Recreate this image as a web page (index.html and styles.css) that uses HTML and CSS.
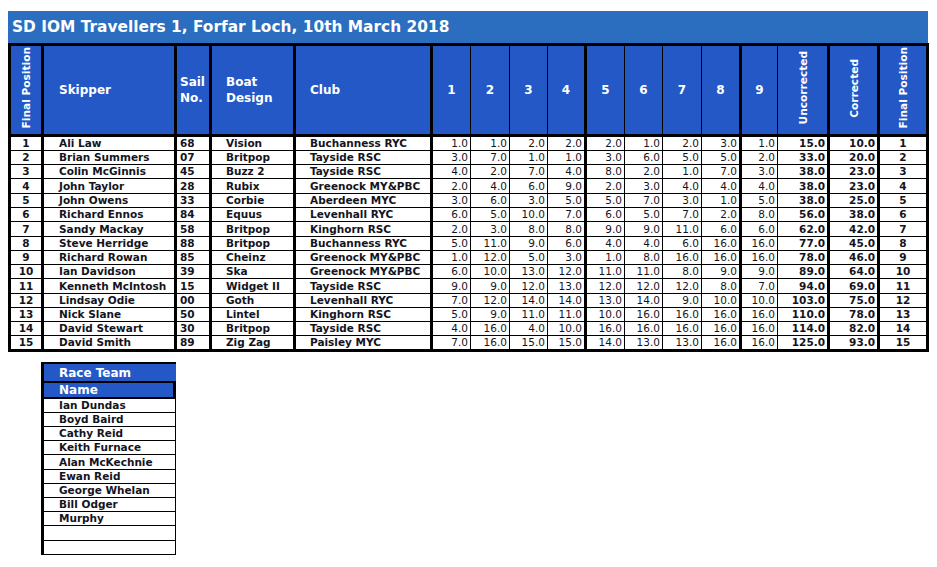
FILE: index.html
```html
<!DOCTYPE html>
<html>
<head>
<meta charset="utf-8">
<link rel="stylesheet" href="styles.css">
</head>
<body>
<div class="page">
  <div class="title">SD IOM Travellers 1, Forfar Loch, 10th March 2018</div>
  <table class="results">
    <colgroup>
      <col class="c-pos"><col class="c-skip"><col class="c-sail"><col class="c-boat"><col class="c-club">
      <col class="c-r38"><col class="c-r39"><col class="c-r38"><col class="c-r39"><col class="c-r38"><col class="c-r38"><col class="c-r39"><col class="c-r40"><col class="c-r36">
      <col class="c-unc"><col class="c-cor"><col class="c-fin">
    </colgroup>
    <thead>
      <tr>
        <th class="ctr"><span class="vert">Final Position</span></th>
        <th class="left skip">Skipper</th>
        <th class="left sail">Sail<br>No.</th>
        <th class="left boat">Boat<br>Design</th>
        <th class="left club">Club</th>
        <th>1</th><th>2</th><th>3</th><th>4</th><th>5</th><th>6</th><th>7</th><th>8</th><th>9</th>
        <th><span class="vert">Uncorrected</span></th>
        <th><span class="vert">Corrected</span></th>
        <th><span class="vert">Final Position</span></th>
      </tr>
    </thead>
    <tbody>
      <tr><td>1</td><td>Ali Law</td><td>68</td><td>Vision</td><td>Buchanness RYC</td><td>1.0</td><td>1.0</td><td>2.0</td><td>2.0</td><td>2.0</td><td>1.0</td><td>2.0</td><td>3.0</td><td>1.0</td><td>15.0</td><td>10.0</td><td>1</td></tr>
      <tr><td>2</td><td>Brian Summers</td><td>07</td><td>Britpop</td><td>Tayside RSC</td><td>3.0</td><td>7.0</td><td>1.0</td><td>1.0</td><td>3.0</td><td>6.0</td><td>5.0</td><td>5.0</td><td>2.0</td><td>33.0</td><td>20.0</td><td>2</td></tr>
      <tr><td>3</td><td>Colin McGinnis</td><td>45</td><td>Buzz 2</td><td>Tayside RSC</td><td>4.0</td><td>2.0</td><td>7.0</td><td>4.0</td><td>8.0</td><td>2.0</td><td>1.0</td><td>7.0</td><td>3.0</td><td>38.0</td><td>23.0</td><td>3</td></tr>
      <tr><td>4</td><td>John Taylor</td><td>28</td><td>Rubix</td><td>Greenock MY&amp;PBC</td><td>2.0</td><td>4.0</td><td>6.0</td><td>9.0</td><td>2.0</td><td>3.0</td><td>4.0</td><td>4.0</td><td>4.0</td><td>38.0</td><td>23.0</td><td>4</td></tr>
      <tr><td>5</td><td>John Owens</td><td>33</td><td>Corbie</td><td>Aberdeen MYC</td><td>3.0</td><td>6.0</td><td>3.0</td><td>5.0</td><td>5.0</td><td>7.0</td><td>3.0</td><td>1.0</td><td>5.0</td><td>38.0</td><td>25.0</td><td>5</td></tr>
      <tr><td>6</td><td>Richard Ennos</td><td>84</td><td>Equus</td><td>Levenhall RYC</td><td>6.0</td><td>5.0</td><td>10.0</td><td>7.0</td><td>6.0</td><td>5.0</td><td>7.0</td><td>2.0</td><td>8.0</td><td>56.0</td><td>38.0</td><td>6</td></tr>
      <tr><td>7</td><td>Sandy Mackay</td><td>58</td><td>Britpop</td><td>Kinghorn RSC</td><td>2.0</td><td>3.0</td><td>8.0</td><td>8.0</td><td>9.0</td><td>9.0</td><td>11.0</td><td>6.0</td><td>6.0</td><td>62.0</td><td>42.0</td><td>7</td></tr>
      <tr><td>8</td><td>Steve Herridge</td><td>88</td><td>Britpop</td><td>Buchanness RYC</td><td>5.0</td><td>11.0</td><td>9.0</td><td>6.0</td><td>4.0</td><td>4.0</td><td>6.0</td><td>16.0</td><td>16.0</td><td>77.0</td><td>45.0</td><td>8</td></tr>
      <tr><td>9</td><td>Richard Rowan</td><td>85</td><td>Cheinz</td><td>Greenock MY&amp;PBC</td><td>1.0</td><td>12.0</td><td>5.0</td><td>3.0</td><td>1.0</td><td>8.0</td><td>16.0</td><td>16.0</td><td>16.0</td><td>78.0</td><td>46.0</td><td>9</td></tr>
      <tr><td>10</td><td>Ian Davidson</td><td>39</td><td>Ska</td><td>Greenock MY&amp;PBC</td><td>6.0</td><td>10.0</td><td>13.0</td><td>12.0</td><td>11.0</td><td>11.0</td><td>8.0</td><td>9.0</td><td>9.0</td><td>89.0</td><td>64.0</td><td>10</td></tr>
      <tr><td>11</td><td>Kenneth McIntosh</td><td>15</td><td>Widget II</td><td>Tayside RSC</td><td>9.0</td><td>9.0</td><td>12.0</td><td>13.0</td><td>12.0</td><td>12.0</td><td>12.0</td><td>8.0</td><td>7.0</td><td>94.0</td><td>69.0</td><td>11</td></tr>
      <tr><td>12</td><td>Lindsay Odie</td><td>00</td><td>Goth</td><td>Levenhall RYC</td><td>7.0</td><td>12.0</td><td>14.0</td><td>14.0</td><td>13.0</td><td>14.0</td><td>9.0</td><td>10.0</td><td>10.0</td><td>103.0</td><td>75.0</td><td>12</td></tr>
      <tr><td>13</td><td>Nick Slane</td><td>50</td><td>Lintel</td><td>Kinghorn RSC</td><td>5.0</td><td>9.0</td><td>11.0</td><td>11.0</td><td>10.0</td><td>16.0</td><td>16.0</td><td>16.0</td><td>16.0</td><td>110.0</td><td>78.0</td><td>13</td></tr>
      <tr><td>14</td><td>David Stewart</td><td>30</td><td>Britpop</td><td>Tayside RSC</td><td>4.0</td><td>16.0</td><td>4.0</td><td>10.0</td><td>16.0</td><td>16.0</td><td>16.0</td><td>16.0</td><td>16.0</td><td>114.0</td><td>82.0</td><td>14</td></tr>
      <tr><td>15</td><td>David Smith</td><td>89</td><td>Zig Zag</td><td>Paisley MYC</td><td>7.0</td><td>16.0</td><td>15.0</td><td>15.0</td><td>14.0</td><td>13.0</td><td>13.0</td><td>16.0</td><td>16.0</td><td>125.0</td><td>93.0</td><td>15</td></tr>
    </tbody>
  </table>

  <table class="team">
    <tr><th class="team-title">Race Team</th></tr>
    <tr><th class="team-name">Name</th></tr>
    <tr><td>Ian Dundas</td></tr>
    <tr><td>Boyd Baird</td></tr>
    <tr><td>Cathy Reid</td></tr>
    <tr><td>Keith Furnace</td></tr>
    <tr><td>Alan McKechnie</td></tr>
    <tr><td>Ewan Reid</td></tr>
    <tr><td>George Whelan</td></tr>
    <tr><td>Bill Odger</td></tr>
    <tr><td>Murphy</td></tr>
    <tr><td></td></tr>
    <tr><td></td></tr>
  </table>
</div>
</body>
</html>
```

FILE: styles.css
```css
* { box-sizing: border-box; }
html, body { margin: 0; padding: 0; background: #ffffff; }
body { font-family: "DejaVu Sans", Verdana, sans-serif; color: #14141e; }
.page { padding: 11px 0 0 8px; }

.title {
  width: 920px;
  height: 32px;
  background: #2b6dbe;
  color: #ffffff;
  font-weight: bold;
  font-size: 15.4px;
  line-height: 33px;
  padding-left: 4px;
  white-space: nowrap;
}

.results {
  table-layout: fixed;
  border-collapse: separate;
  border-spacing: 0;
  width: 921px;
  border-top: 3px solid #000;
  border-left: 3px solid #000;
  font-size: 10.5px;
  font-weight: bold;
}
.c-pos { width: 33px; }
.c-skip { width: 133px; }
.c-sail { width: 35px; }
.c-boat { width: 84px; }
.c-club { width: 137px; }
.c-r36 { width: 36px; }
.c-r38 { width: 38px; }
.c-r39 { width: 39px; }
.c-r40 { width: 40px; }
.c-unc { width: 52px; }
.c-cor { width: 50px; }
.c-fin { width: 49px; }

.results th, .results td {
  padding: 0;
  border-right: 1px solid #000;
  border-bottom: 1px solid #000;
  white-space: nowrap;
  overflow: hidden;
}
.results th:nth-child(1), .results td:nth-child(1),
.results th:nth-child(2), .results td:nth-child(2),
.results th:nth-child(3), .results td:nth-child(3),
.results th:nth-child(4), .results td:nth-child(4),
.results th:nth-child(5), .results td:nth-child(5),
.results th:nth-child(9), .results td:nth-child(9),
.results th:nth-child(13), .results td:nth-child(13),
.results th:nth-child(15), .results td:nth-child(15),
.results th:nth-child(16), .results td:nth-child(16),
.results th:nth-child(17), .results td:nth-child(17) {
  border-right-width: 3px;
}

.results th {
  height: 91px;
  background: #2358c6;
  color: #ffffff;
  font-size: 12px;
  line-height: 16px;
  border-bottom-width: 3px;
  text-align: center;
  vertical-align: middle;
}
.results th.left { text-align: left; }
.results th.skip { padding-left: 15px; }
.results th.sail { padding-left: 3px; }
.results th.boat { padding-left: 14px; }
.results th.club { padding-left: 14px; }

.vert {
  display: inline-block;
  writing-mode: vertical-rl;
  transform: rotate(180deg);
  font-size: 10.6px;
  line-height: 12px;
}

.results td {
  height: 14px;
  line-height: 13px;
  text-align: right;
  padding-right: 2px;
  font-weight: normal;
}
.results tbody tr:nth-child(4) td,
.results tbody tr:nth-child(7) td,
.results tbody tr:nth-child(11) td { height: 15px; }
.results tbody tr:last-child td { border-bottom-width: 3px; height: 16px; }
.results td:nth-child(1) { text-align: center; padding: 0; font-weight: bold; }
.results td:nth-child(2) { text-align: left; padding-left: 15px; font-weight: bold; }
.results td:nth-child(3) { text-align: left; padding-left: 3px; font-weight: bold; }
.results td:nth-child(4) { text-align: left; padding-left: 14px; font-weight: bold; }
.results td:nth-child(5) { text-align: left; padding-left: 14px; font-weight: bold; }
.results td:nth-child(15),
.results td:nth-child(16) { font-weight: bold; }
.results td:nth-child(17) { text-align: center; padding: 0; font-weight: bold; }

.team {
  margin: 10px 0 0 33px;
  table-layout: fixed;
  border-collapse: separate;
  border-spacing: 0;
  width: 135px;
  border-top: 2px solid #000;
  border-left: 3px solid #000;
  font-size: 10.5px;
  font-weight: bold;
}
.team th, .team td {
  padding: 0 0 0 15px;
  text-align: left;
  white-space: nowrap;
}
.team th {
  background: #2358c6;
  color: #ffffff;
  font-size: 12px;
}
.team .team-title { height: 17px; line-height: 15px; padding-top: 2px; }
.team .team-name {
  height: 18px;
  line-height: 14px;
  border-top: 2px solid #000;
  border-bottom: 2px solid #000;
  border-right: 3px solid #000;
}
.team td {
  height: 14px;
  line-height: 13px;
  border-right: 1px solid #000;
  border-bottom: 1px solid #000;
}
.team tr:nth-child(7) td,
.team tr:nth-child(12) td { height: 15px; }
```
